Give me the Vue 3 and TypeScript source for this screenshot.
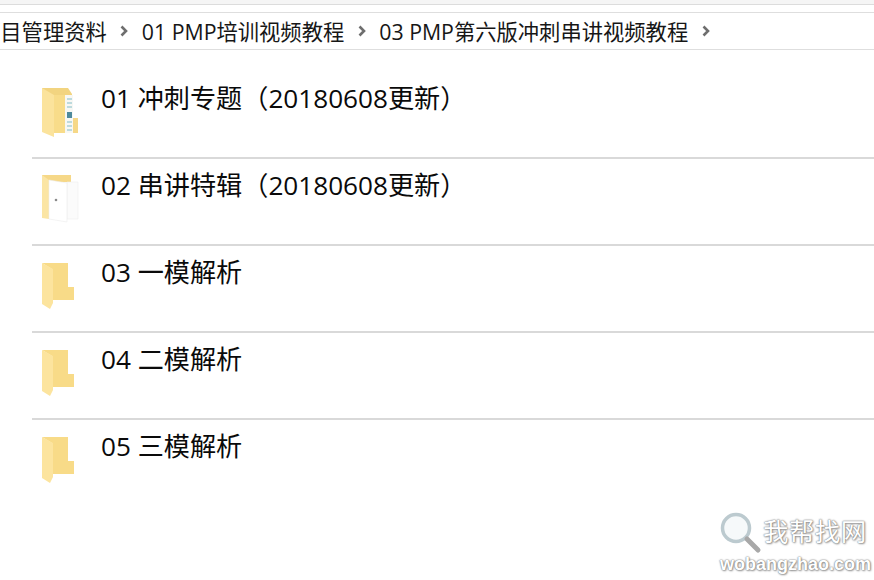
<script setup lang="ts">
type Kind = 'docs' | 'white' | 'plain'

const crumbs = ['项目管理资料', '01 PMP培训视频教程', '03 PMP第六版冲刺串讲视频教程']

const folders: { name: string; kind: Kind }[] = [
  { name: '01 冲刺专题（20180608更新）', kind: 'docs' },
  { name: '02 串讲特辑（20180608更新）', kind: 'white' },
  { name: '03 一模解析', kind: 'plain' },
  { name: '04 二模解析', kind: 'plain' },
  { name: '05 三模解析', kind: 'plain' },
]
</script>

<template>
  <div class="explorer">
    <div class="toolbar"></div>
    <nav class="crumbs">
      <template v-for="c in crumbs" :key="c">
        <span class="crumb">{{ c }}</span>
        <svg class="chevron" viewBox="0 0 8 12" width="8" height="12">
          <path d="M1.500 1.500 6 6l-4.500 4.500" fill="none" stroke="#6e6e6e" stroke-width="2.600" />
        </svg>
      </template>
    </nav>
    <ul class="list">
      <li v-for="f in folders" :key="f.name" class="row">
        <svg class="folder" viewBox="0 0 40 52" width="40" height="52">
          <template v-if="f.kind === 'docs'">
            <path d="M2 1h26l4 6v38H2z" fill="#f2d480" />
            <path d="M25 8h8v38h-8z" fill="#f8f8f4" />
            <path d="M27 12h5M27 16h5M27 20h5M27 35h5M27 39h5M27 43h5" stroke="#a9cfd6" stroke-width="1.500" />
            <path d="M27 25h5v6h-5z" fill="#4f8a9c" />
            <path d="M33 31h5v15h-5z" fill="#f6d888" />
            <path d="M14 8h11v38H14z" fill="#f8dc8a" />
            <path d="M2 1l12 7v42L2 45z" fill="#fbe39c" />
          </template>
          <template v-else-if="f.kind === 'white'">
            <path d="M2 1h29v7H2z" fill="#f6d888" />
            <path d="M2 1l7 5v39l-7-1z" fill="#fbe5a4" />
            <path d="M27 8h11v37H27z" fill="#fbfbfb" stroke="#eeeeee" stroke-width="0.600" />
            <path d="M9 6l18 3v39L9 45z" fill="#ffffff" stroke="#ececec" stroke-width="0.600" />
            <circle cx="16" cy="26" r="1.300" fill="#8a8a8a" />
          </template>
          <template v-else>
            <path d="M2 2h26v24h6v13H12V8z" fill="#f8db88" />
            <path d="M2 2l11 6v34l-3 6-8-5z" fill="#fce49e" />
          </template>
        </svg>
        <span class="name">{{ f.name }}</span>
      </li>
    </ul>
    <div class="watermark">
      <div class="mark-top">
        <svg class="lens" viewBox="0 0 44 44" width="44" height="44">
          <circle cx="16" cy="16" r="13.500" fill="#f6f9fa" stroke="#bccacf" stroke-width="3.500" />
          <path d="M27 27l11 11" stroke="#a8a8a8" stroke-width="5" stroke-linecap="round" />
        </svg>
        <span class="mark-cn">我帮找网</span>
      </div>
      <span class="mark-en">wobangzhao.com</span>
    </div>
  </div>
</template>

<style scoped>
.explorer {
  position: relative;
  width: 874px;
  height: 580px;
  overflow: hidden;
  background: #fff;
  color: #111;
  font-family: "Open Sans", "Noto Sans CJK SC", sans-serif;
}

.toolbar {
  height: 4px;
  background: #f5f5f5;
  border-bottom: 1px solid #dcdcdc;
  margin-bottom: 7px;
}

.crumbs {
  display: flex;
  align-items: center;
  gap: 13.500px;
  height: 36px;
  margin-left: -21px;
  border-top: 1px solid #dedede;
  border-bottom: 1px solid #dedede;
  font-size: 21.300px;
  white-space: nowrap;
  color: #161616;
}

.crumb {
  position: relative;
  top: -1px;
}

.chevron {
  flex: none;
}

.list {
  list-style: none;
  margin: 0;
  padding: 22px 0 0 32px;
}

.row {
  box-sizing: border-box;
  display: flex;
  align-items: flex-start;
  gap: 21px;
  height: 87px;
  padding: 7px 0 0 8px;
  border-bottom: 2px solid #d9d9d9;
}

.row:last-child {
  border-bottom: none;
}

.folder {
  flex: none;
  margin-top: 8px;
}

.name {
  font-size: 26.150px;
  line-height: 38px;
  white-space: nowrap;
  color: #0a0a0a;
}

.watermark {
  position: absolute;
  left: 720px;
  top: 512px;
  display: flex;
  flex-direction: column;
  color: #fff;
  text-shadow: 0 0 1px #777, 0 0 2px #8a8a8a, 1px 1px 2px #a0a0a0;
}

.mark-top {
  display: flex;
  height: 42px;
}

.lens {
  flex: none;
  margin-right: -1px;
}

.mark-cn {
  margin-top: 4px;
  font-size: 25.500px;
  line-height: 30px;
  letter-spacing: 0.400px;
}

.mark-en {
  font-family: "Liberation Sans", sans-serif;
  font-size: 18px;
  font-weight: 700;
  line-height: 20px;
}
</style>
